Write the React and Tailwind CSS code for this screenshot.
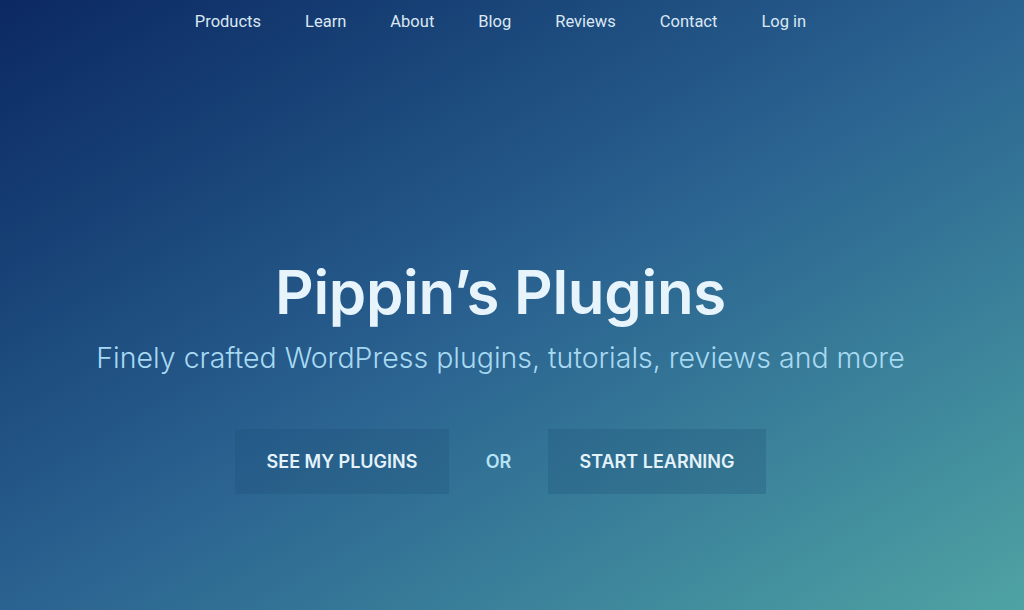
const navLinks = ["Products", "Learn", "About", "Blog", "Reviews", "Contact", "Log in"];

const App = () => {
  return (
    <div className="w-[1024px] h-[610px] overflow-hidden bg-linear-to-br from-[#0c2862] via-[#2a6290] to-[#4fa3a3] font-['Inter','Liberation_Sans',sans-serif]">
      <div className="pr-[23px]">
        {/* top navigation */}
        <nav className="flex justify-center gap-[44px] pt-[12px] h-[43px] font-['Roboto','Liberation_Sans',sans-serif] text-[16.5px] text-[#dbe7f3]">
          {navLinks.map((link) => (
            <a key={link} href="#" className="leading-[20px]">{link}</a>
          ))}
        </nav>

        {/* hero */}
        <div className="flex flex-col items-center pt-[214px]">
          <h1 className="text-[60px] leading-[70px] font-semibold text-[#e8f4fc] tracking-[-0.3px]">Pippin’s Plugins</h1>
          <p className="mt-[13px] text-[28.5px] leading-[36px] font-light text-[#a8d9f2]">
            Finely crafted WordPress plugins, tutorials, reviews and more
          </p>
          <div className="flex items-center mt-[53px] text-[18px] font-semibold text-[#e4f3fb] uppercase">
            <a href="#" className="h-[65px] w-[214px] flex items-center justify-center bg-[#1d4c73]/25">See my plugins</a>
            <span className="w-[99px] text-center text-[#b8e3f6]">Or</span>
            <a href="#" className="h-[65px] w-[218px] flex items-center justify-center bg-[#1d4c73]/25">Start learning</a>
          </div>
        </div>
      </div>
    </div>
  );
};

export default App;
